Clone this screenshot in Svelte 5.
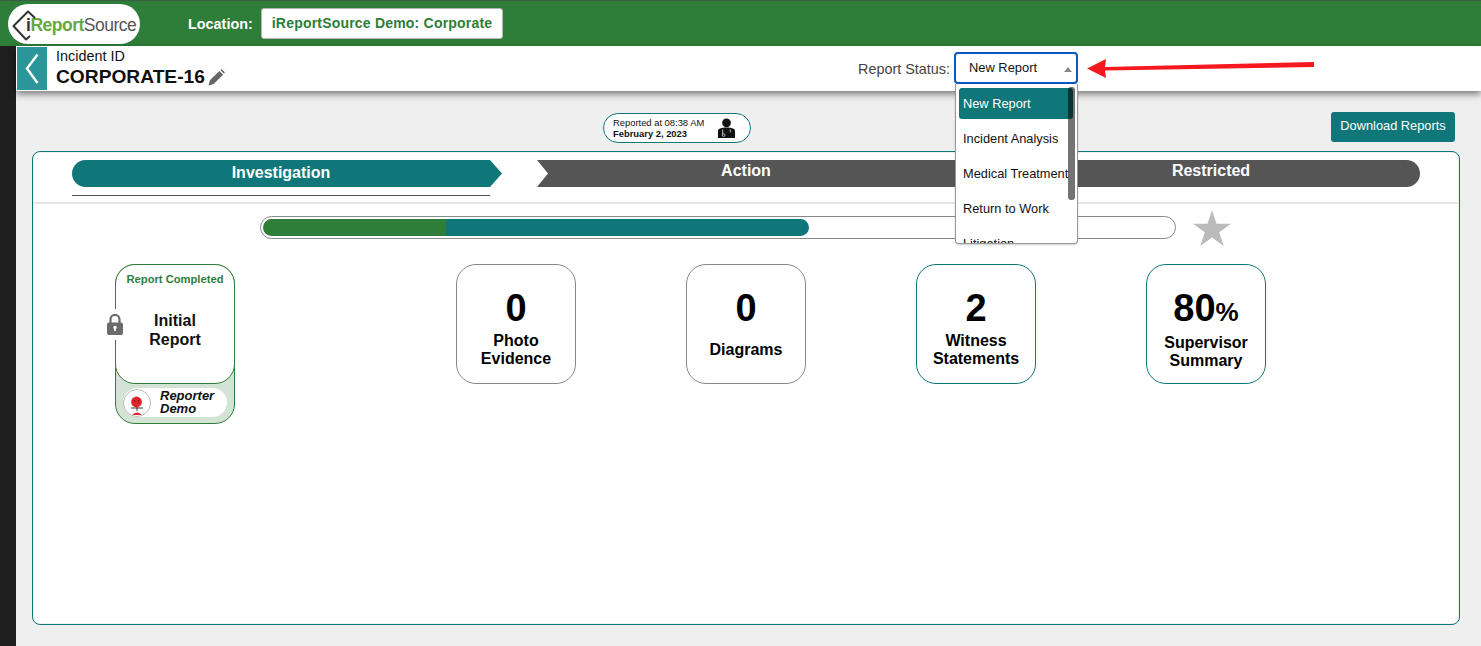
<script lang="ts">
    const stages = [
        { name: "Investigation", active: true },
        { name: "Action", active: false },
        { name: "Restricted", active: false },
    ];
    const statuses = ["New Report", "Incident Analysis", "Medical Treatment", "Return to Work", "Litigation"];
    const tiles = [
        { value: "0", label: ["Photo", "Evidence"], done: false },
        { value: "0", label: ["Diagrams"], done: false },
        { value: "2", label: ["Witness", "Statements"], done: true },
        { value: "80", unit: "%", label: ["Supervisor", "Summary"], done: true },
    ];
</script>

<header class="topbar">
    <div class="logo">
        <svg class="logo-mark" viewBox="0 0 26 32" width="26" height="32">
            <path d="M23 8 L16 1.5 L1.5 16 L14 29.5 L18 26" fill="none" stroke="#333" stroke-width="2" stroke-linejoin="round" />
        </svg>
        <span class="logo-i">i</span><span class="logo-report">Report</span><span class="logo-source">Source</span>
    </div>
    <span class="location-label">Location:</span>
    <div class="location">iReportSource Demo: Corporate</div>
</header>

<div class="body">
    <div class="rail"></div>
    <main>
        <section class="incident">
            <button class="back" aria-label="Back">
                <svg viewBox="0 0 14 32" width="14" height="32">
                    <path d="M12.5 1.5 L2 15.5 L12.5 30" fill="none" stroke="#fff" stroke-width="2.4" />
                </svg>
            </button>
            <div class="incident-id">
                <div class="id-label">Incident ID</div>
                <div class="id-value">
                    CORPORATE-16
                    <svg viewBox="0 0 18 18" width="17" height="17">
                        <path d="M0.5 17.5 L2 12 L12 2 L16 6 L6 16 Z M13 1 L14.5 0.2 L17.8 3.5 L17 5 Z" fill="#666" />
                    </svg>
                </div>
            </div>
            <span class="status-label">Report Status:</span>
            <div class="status">
                <div class="select">
                    New Report
                    <span class="caret"></span>
                </div>
                <ul class="options">
                    {#each statuses as s, i}
                        <li class:selected={i === 0}>{s}</li>
                    {/each}
                </ul>
                <div class="scrollbar"></div>
                <svg class="arrow" viewBox="0 0 230 21" width="230" height="21">
                    <path d="M0 10.5 L19 1 L18 9 L227 4 L227 9 L18 12.5 L19 20 Z" fill="#f5191f" />
                </svg>
            </div>
        </section>

        <div class="content">
            <div class="toolbar">
                <div class="reported">
                    <div class="reported-text">
                        <div>Reported at 08:38 AM</div>
                        <strong>February 2, 2023</strong>
                    </div>
                    <svg viewBox="0 0 20 22" width="19" height="21">
                        <circle cx="10" cy="5" r="4.6" fill="#111" />
                        <path d="M1 21 V14 Q1 11 5 10.5 L8 10 H12 L15 10.5 Q19 11 19 14 V21 Z" fill="#111" />
                        <path d="M6 12 V17 M14 12 V15" stroke="#fff" stroke-width="0.8" fill="none" />
                        <circle cx="7" cy="18" r="1.4" fill="none" stroke="#fff" stroke-width="0.7" />
                    </svg>
                </div>
                <button class="download">Download Reports</button>
            </div>

            <section class="panel">
                <div class="stages">
                    {#each stages as stage, i}
                        <div class="stage stage-{i}" class:active={stage.active}>
                            <span>{stage.name}</span>
                        </div>
                    {/each}
                    <div class="stage-line"></div>
                </div>

                <div class="progress-row">
                    <div class="progress">
                        <div class="seg-green"></div>
                        <div class="seg-teal"></div>
                    </div>
                    <svg viewBox="0 0 38 36" width="38" height="36">
                        <path d="M19 0 L23.5 13.7 L38 13.7 L26.2 22.3 L30.7 36 L19 27.5 L7.3 36 L11.8 22.3 L0 13.7 L14.5 13.7 Z" fill="#bbb" />
                    </svg>
                </div>

                <div class="cards">
                    <div class="initial">
                        <div class="initial-top">
                            <div class="completed">Report Completed</div>
                            <div class="initial-name">Initial<br />Report</div>
                        </div>
                        <div class="reporter">
                            <div class="avatar">
                                <svg viewBox="0 0 26 26" width="26" height="26">
                                    <path d="M13 15 V21 M7 18 L19 18" stroke="#222" stroke-width="0.9" />
                                    <circle cx="12.5" cy="12" r="5.4" fill="#e0262a" />
                                    <path d="M8 25 Q13 20 18 25 Z" fill="#e0262a" />
                                    <circle cx="10.5" cy="11" r="0.7" fill="#611" />
                                    <circle cx="14.5" cy="11" r="0.7" fill="#611" />
                                </svg>
                            </div>
                            <div class="reporter-name">Reporter<br />Demo</div>
                        </div>
                        <div class="lock">
                            <svg viewBox="0 0 16 21" width="16" height="21">
                                <path d="M3.5 9 V5.5 A4.5 4.5 0 0 1 12.5 5.5 V9" fill="none" stroke="#6b6b6b" stroke-width="2.2" />
                                <rect x="0" y="8.5" width="16" height="12.5" rx="2" fill="#6b6b6b" />
                                <circle cx="8" cy="13.5" r="1.7" fill="#fff" />
                                <rect x="7.2" y="13.5" width="1.6" height="3.5" fill="#fff" />
                            </svg>
                        </div>
                    </div>
                    <div class="tiles">
                        {#each tiles as tile}
                            <div class="tile" class:done={tile.done} class:wide={tile.unit}>
                                <div class="tile-value">{tile.value}{#if tile.unit}<small>{tile.unit}</small>{/if}</div>
                                <div class="tile-label">
                                    {#each tile.label as line}
                                        <div>{line}</div>
                                    {/each}
                                </div>
                            </div>
                        {/each}
                    </div>
                </div>
            </section>
        </div>
    </main>
</div>

<style>
    :global(body) {
        background: #efefef;
        font-family: "Liberation Sans", Arial, sans-serif;
        overflow: hidden;
    }
    :global(#app) {
        height: 646px;
    }

    .topbar {
        display: flex;
        align-items: center;
        height: 46px;
        box-sizing: border-box;
        padding-left: 8px;
        background: #2e7d38;
        border-top: 1px solid #3a5f40;
    }
    .logo {
        display: flex;
        align-items: baseline;
        width: 132px;
        height: 40px;
        box-sizing: border-box;
        padding-left: 18px;
        line-height: 42px;
        border-radius: 20px;
        background: #fff;
        position: relative;
        font-size: 17.5px;
        letter-spacing: -0.5px;
    }
    .logo-mark {
        position: absolute;
        left: 4px;
        top: 6px;
    }
    .logo-i {
        color: #333;
        font-weight: 700;
    }
    .logo-report {
        color: #66a844;
        font-weight: 700;
    }
    .logo-source {
        color: #555;
    }
    .location-label {
        margin-left: 48px;
        color: #fff;
        font-size: 14.4px;
        font-weight: 700;
    }
    .location {
        margin-left: 8px;
        padding: 0 10px;
        height: 31px;
        line-height: 29px;
        box-sizing: border-box;
        background: #fff;
        border: 1px solid #b5b5b5;
        border-radius: 3px;
        color: #2e7d38;
        font-size: 14px;
        font-weight: 700;
        letter-spacing: 0.2px;
    }

    .body {
        display: flex;
        height: 600px;
    }
    .rail {
        width: 16px;
        flex: none;
        background: #1f1f1f;
    }
    main {
        flex: 1;
        min-width: 0;
        display: flex;
        flex-direction: column;
    }

    .incident {
        position: relative;
        z-index: 2;
        display: flex;
        align-items: center;
        height: 45px;
        background: #fff;
        box-shadow: 0 3px 7px rgba(0, 0, 0, 0.5);
    }
    .back {
        align-self: stretch;
        display: flex;
        align-items: center;
        justify-content: center;
        width: 30px;
        margin: 1px 0 1px 1px;
        padding: 0;
        border: 0;
        background: #2a9699;
    }
    .incident-id {
        margin-left: 9px;
        color: #111;
    }
    .id-label {
        font-size: 14.4px;
        line-height: 18px;
        margin-top: -1px;
    }
    .id-value {
        display: flex;
        align-items: center;
        gap: 3px;
        font-size: 19.2px;
        line-height: 24px;
        font-weight: 700;
    }
    .status-label {
        margin-left: auto;
        margin-right: 4px;
        font-size: 14.4px;
        color: #444;
    }
    .status {
        position: relative;
        margin-right: 403px;
        align-self: flex-start;
        margin-top: 6px;
    }
    .select {
        position: relative;
        box-sizing: border-box;
        width: 124px;
        height: 32px;
        padding-left: 13px;
        line-height: 28px;
        font-size: 12.9px;
        color: #111;
        background: #fff;
        border: 2px solid #0b57c0;
        border-radius: 4px;
    }
    .caret {
        position: absolute;
        right: 4px;
        top: 13px;
        border-left: 4px solid transparent;
        border-right: 4px solid transparent;
        border-bottom: 5px solid #888;
    }
    .arrow {
        position: absolute;
        left: 133px;
        top: 6px;
    }
    .options {
        position: absolute;
        left: 1px;
        top: 32px;
        box-sizing: border-box;
        width: 123px;
        height: 160px;
        margin: 0;
        padding: 4px 4px 0 3px;
        list-style: none;
        overflow: hidden;
        background: #fff;
        border: 1px solid #999;
        border-top: 0;
        border-radius: 0 0 4px 4px;
        box-shadow: 0 1px 2px rgba(0, 0, 0, 0.2);
    }
    .options li {
        height: 31px;
        margin-bottom: 4px;
        padding-left: 4px;
        line-height: 32px;
        font-size: 12.8px;
        color: #111;
        white-space: nowrap;
        border-radius: 3px;
    }
    .options li.selected {
        background: #0f7779;
        color: #fff;
    }
    .scrollbar {
        position: absolute;
        left: 114px;
        top: 35px;
        width: 7px;
        height: 113px;
        border-radius: 3px;
        background: rgba(0, 0, 0, 0.55);
    }

    .content {
        flex: 1;
        display: flex;
        flex-direction: column;
        padding: 0 21px 0 16px;
    }
    .toolbar {
        display: flex;
        align-items: flex-start;
        justify-content: space-between;
        height: 60px;
        padding: 21px 5px 0 571px;
        box-sizing: border-box;
    }
    .reported {
        display: flex;
        align-items: center;
        justify-content: space-between;
        box-sizing: border-box;
        width: 148px;
        height: 30px;
        margin-top: 1px;
        padding: 0 14px 0 9px;
        background: #fff;
        border: 1px solid #0f7779;
        border-radius: 15px;
        font-size: 9.4px;
        line-height: 11px;
        color: #111;
    }
    .download {
        width: 124px;
        height: 30px;
        padding: 0 0 3px;
        border: 0;
        border-radius: 3px;
        background: #0f7779;
        color: #fff;
        font-family: inherit;
        font-size: 12.8px;
    }

    .panel {
        height: 474px;
        box-sizing: border-box;
        background: #fff;
        border: 1px solid #0f7779;
        border-radius: 8px;
        box-shadow: inset 0 0 2px rgba(0, 0, 0, 0.2);
    }
    .stages {
        display: grid;
        grid-template-columns: 430px 430px 418px;
        grid-template-rows: 27px auto;
        column-gap: 35px;
        height: 52px;
        box-sizing: border-box;
        padding: 8px 0 0 39px;
        border-bottom: 2px solid #e6e6e6;
    }
    .stage {
        height: 27px;
        display: flex;
        justify-content: center;
        color: #fff;
        font-size: 16px;
        font-weight: 700;
        background: #555;
        line-height: 21px;
    }
    .stage-0 {
        padding-right: 12px;
        line-height: 26px;
        background: #0f7779;
        border-radius: 14px 0 0 14px;
        clip-path: polygon(0 0, calc(100% - 12px) 0, 100% 50%, calc(100% - 12px) 100%, 0 100%);
        position: relative;
    }
    .stage-1 {
        padding-right: 12px;
        clip-path: polygon(0 0, calc(100% - 12px) 0, 100% 50%, calc(100% - 12px) 100%, 0 100%, 11px 50%);
    }
    .stage-2 {
        border-radius: 0 14px 14px 0;
    }
    .stage-line {
        grid-column: 1;
        width: 418px;
        height: 1px;
        margin-top: 8px;
        background: #555;
    }

    .progress-row {
        display: flex;
        align-items: flex-start;
        gap: 17px;
        margin: 6px 0 0 227px;
    }
    .progress {
        display: flex;
        box-sizing: border-box;
        width: 916px;
        height: 23px;
        margin-top: 6px;
        padding: 2px;
        background: #fff;
        border: 1px solid #888;
        border-radius: 12px;
    }
    .seg-green {
        width: 183px;
        background: #2e7d38;
        border-radius: 9px 0 0 9px;
    }
    .seg-teal {
        width: 363px;
        background: #0f7779;
        border-radius: 0 9px 9px 0;
    }

    .cards {
        display: flex;
        margin: 18px 0 0 82px;
    }
    .initial {
        position: relative;
        box-sizing: border-box;
        width: 120px;
        height: 160px;
        background: #d3e4d5;
        border: 1px solid #2e7d38;
        border-radius: 20px;
    }
    .initial-top {
        box-sizing: border-box;
        height: 120px;
        margin: -1px -1px 0;
        padding-top: 8px;
        text-align: center;
        background: #fff;
        border: 1px solid #2e7d38;
        border-radius: 20px;
    }
    .completed {
        font-size: 11.2px;
        line-height: 13px;
        font-weight: 700;
        color: #2e7d38;
    }
    .initial-name {
        margin-top: 25px;
        font-size: 16px;
        line-height: 19px;
        font-weight: 700;
        color: #111;
    }
    .reporter {
        display: flex;
        align-items: center;
        height: 29px;
        margin: 4px 7px 0;
        background: #fff;
        border-radius: 15px;
    }
    .avatar {
        box-sizing: border-box;
        width: 28px;
        height: 28px;
        flex: none;
        overflow: hidden;
        border: 1px solid #bbb;
        border-radius: 50%;
        background: #fff;
    }
    .reporter-name {
        margin: -2px 0 0 9px;
        font-size: 13px;
        line-height: 13px;
        font-style: italic;
        font-weight: 700;
        color: #111;
    }
    .lock {
        position: absolute;
        left: -9px;
        top: 44px;
        padding: 5px 0;
        line-height: 0;
        background: #fff;
    }

    .tiles {
        display: flex;
        gap: 110px;
        margin-left: 221px;
    }
    .tile {
        box-sizing: border-box;
        width: 120px;
        height: 120px;
        padding-top: 21px;
        text-align: center;
        border: 1px solid #888;
        border-radius: 20px;
        color: #000;
    }
    .tile.done {
        border-color: #0f7779;
    }
    .tile-value {
        font-size: 38px;
        line-height: 44px;
        font-weight: 700;
    }
    .tile-value small {
        font-size: 26px;
        line-height: 0;
    }
    .tile-label {
        display: flex;
        flex-direction: column;
        justify-content: center;
        height: 36px;
        margin-top: 2px;
        font-size: 16px;
        line-height: 18px;
        font-weight: 700;
    }
    .tile.wide .tile-label {
        margin-top: 4px;
    }
</style>
